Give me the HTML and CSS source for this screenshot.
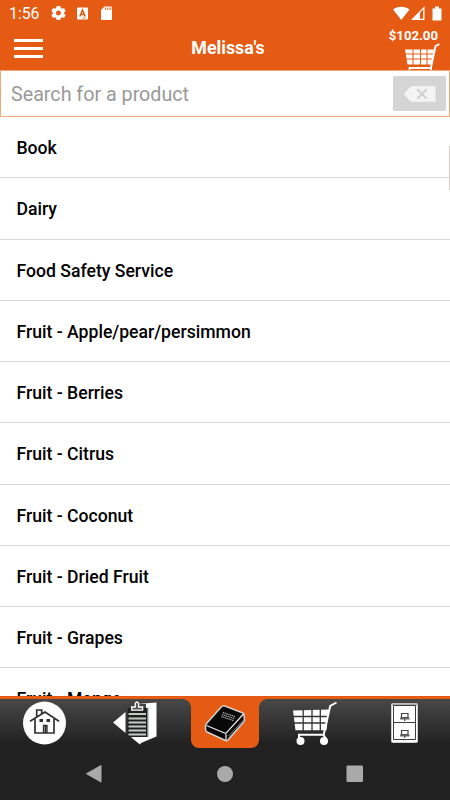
FILE: index.html
```
<!DOCTYPE html>
<html lang="en">
<head>
  <meta charset="UTF-8">
  <title>Melissa's</title>
  <link rel="stylesheet" href="styles.css">
</head>
<body>
  <div class="status-bar">
    <span class="time">1:56</span>
    <svg class="status-left" width="66" height="16" viewBox="0 0 66 16">
      <g fill="#fff">
        <path fill-rule="evenodd" d="M5.7 0h3.6l.5 2 1.2.7 2-.6 1.6 2.8-1.5 1.5v1.2l1.5 1.5-1.6 2.8-2-.6-1.2.7-.5 2H5.7l-.5-2-1.200-.7-2 .6L.4 9.100l1.500-1.500V6.400L.4 4.900 2 2.100l2 .6L5.200 2zM7.500 4.500a2.500 2.500 0 1 0 0 5 2.500 2.500 0 0 0 0-5z"/>
        <rect x="26" y="1.500" width="11" height="12" rx="1"/>
        <path d="M53.500 .5H60q1 0 1 1V13q0 1-1 1h-9q-1 0-1-1V4z"/>
      </g>
      <path d="M28.800 10.500l2.700-6.500 2.700 6.500M29.800 8.500h3.400" fill="none" stroke="#e55b13" stroke-width="1.500"/>
      <path d="M31 12h4" stroke="#e55b13" stroke-width=".7"/>
      <path d="M54.500 1.500V4M56.300 1.500V4M58.100 1.500V4M59.800 1.500V4" stroke="#e55b13" stroke-width=".8"/>
    </svg>
    <svg class="status-right" width="50" height="16" viewBox="0 0 50 16">
      <path d="M0 3.500C4.500-.3 12-.3 16.500 3.500L8.300 14z" fill="#fff"/>
      <path d="M18 14L31.500.3V14z" fill="#fff"/>
      <path d="M27 6.500l3.200-3.300v9.600H27z" fill="#e55b13"/>
      <path d="M39.500 2.500H42v-2h4v2h2.500v12h-9z" fill="#fff"/>
    </svg>
  </div>

  <div class="header">
    <div class="menu">
      <span></span>
      <span></span>
      <span></span>
    </div>
    <div class="title">Melissa's</div>
    <div class="cart">
      <div class="total">$102.00</div>
      <svg width="36" height="27" viewBox="0 0 36 27">
        <path d="M0 6.500h29L26.500 21.500H2.500z" fill="#fff"/>
        <path d="M0 11h29M1 16h28M8 6v16M15.500 6v16M22 6v16" stroke="#e55b13" stroke-width="1"/>
        <path d="M34.500 1l-4 2.200L26 24.500M4.500 27v-2H26v2" fill="none" stroke="#fff" stroke-width="1.800"/>
      </svg>
    </div>
  </div>

  <div class="search">
    <span class="placeholder">Search for a product</span>
    <div class="clear">
      <svg width="32" height="16" viewBox="0 0 32 16">
        <path d="M0 8l5.500-6.500L8 .3h23.500v15.400H8l-2.500-1.200z" fill="#f4f4f4"/>
        <path d="M13.200 3.200l9.500 9.500M22.700 3.200l-9.500 9.500" stroke="#d0d1d0" stroke-width="2"/>
      </svg>
    </div>
  </div>

  <div class="list">
    <div class="row">Book</div>
    <div class="row">Dairy</div>
    <div class="row">Food Safety Service</div>
    <div class="row">Fruit - Apple/pear/persimmon</div>
    <div class="row">Fruit - Berries</div>
    <div class="row">Fruit - Citrus</div>
    <div class="row">Fruit - Coconut</div>
    <div class="row">Fruit - Dried Fruit</div>
    <div class="row">Fruit - Grapes</div>
    <div class="row">Fruit - Mango</div>
    <div class="scrollbar"></div>
  </div>

  <div class="tabs">
    <div class="tab">
      <svg width="50" height="48" viewBox="0 0 50 48">
        <circle cx="24.500" cy="24" r="21.500" fill="#fff"/>
        <g fill="none" stroke="#303030" stroke-width="1.700">
          <path d="M10 22.200L25 13l14 9.200M15 20v14h19V20M16.700 17.500v-6.500h5V14.500" />
          <path d="M23.500 34v-7.500h3.500V34" stroke-width="1.300"/>
        </g>
        <path d="M19.500 20h3.500v3h-3.500zM26.500 20H30v3h-3.500zM24.500 26.500h2V34h-2z" fill="#303030"/>
      </svg>
    </div>
    <div class="tab">
      <svg width="50" height="48" viewBox="0 0 50 48">
        <path d="M27 5l19.500-1.500v34L31 44l-1 1.500L21 38.200l15-1.700V5z" fill="#fff"/>
        <path d="M15.500 13v21L3 23.500z" fill="#fff"/>
        <path d="M17.800 9h20.200v29H17.800z" fill="#202020"/>
        <path d="M38 8v30" stroke="#a9bbb4" stroke-width="1.300"/>
        <path d="M18.500 15H36M18.500 19.500H36M18.500 23.500H36M18.500 27.500H36M18.500 31.500H36M18.500 35.500H36" stroke="#c4cbc7" stroke-width="1.800"/>
        <path d="M21.700 8h3.500V4.500q1.700-3 3.400 0V8h4v3.200H21.700z" fill="#555" stroke="#fff" stroke-width="1.300"/>
      </svg>
    </div>
    <div class="tab active">
      <svg width="50" height="48" viewBox="0 0 50 48">
        <g transform="translate(4.500 2)">
          <path d="M16.700 6Q18.500 4 21 5.200l17.500 6.800q1.300.5 1 2l.5 5.500q-.2 1.200-1.200 2L23.500 39q-1 1.200-2.500.5L2.500 31q-1.700-1-1.500-3v-3q.2-1.500 1.500-3z" fill="#080808" stroke="#d2d0ce" stroke-width="1.500"/>
          <path d="M2 24.500l18 7.500q1.500.5 2.500-.8L39 13M21.500 33v6" fill="none" stroke="#eee" stroke-width="1.200"/>
          <path d="M24 35l15-16M24 37.300l15-16.500" stroke="#bcb9b5" stroke-width=".7"/>
          <path d="M18.500 11.400l12 4.200M17.600 13.400l12 4.200M16.800 15.400l12 4.200" stroke="#aaa" stroke-width="1.200" stroke-dasharray="1.300 .6"/>
        </g>
      </svg>
    </div>
    <div class="tab">
      <svg width="50" height="48" viewBox="0 0 50 48">
        <path d="M3 11.500l36-1-2.500 20.700h-31z" fill="#fff"/>
        <path d="M2 17.500h37M3 24h36M13.200 10v22M22 10v22M30.300 10v22" stroke="#343434" stroke-width="1.300"/>
        <path d="M46.500 3.500l-6.300 3.500-6.500 28.700H9V40M33.500 35.500l2 4" fill="none" stroke="#fff" stroke-width="2"/>
        <circle cx="10.500" cy="42" r="4" fill="#fff"/>
        <circle cx="34" cy="42" r="4" fill="#fff"/>
      </svg>
    </div>
    <div class="tab">
      <svg width="50" height="48" viewBox="0 0 50 48">
        <rect x="11.500" y="4.500" width="26" height="39" rx="1" fill="#fff" stroke="#ccc" stroke-width="1"/>
        <path d="M12 5.500h25" stroke="#aaa" stroke-width="2"/>
        <path d="M13.500 6.500h22v34h-22zM13.500 23.500h22" fill="none" stroke="#3c3c3c" stroke-width="1"/>
        <path d="M21.500 14.500h6.500v4h-6.500zM24.700 19v3M21.500 31.500h6.500v4h-6.500zM24.700 36v3" fill="none" stroke="#444" stroke-width="1.200"/>
        <path d="M20 19.500h9.500M20 36.500h9.500" stroke="#666" stroke-width="2"/>
      </svg>
    </div>
  </div>

  <div class="nav-bar">
    <svg width="450" height="52" viewBox="0 0 450 52">
      <g fill="#a9a9a9">
        <path d="M86.500 25.200l14-8q1-.4 1 .8v15.500q0 1.200-1 .8l-14-8q-.7-.6 0-1.100z"/>
        <circle cx="225" cy="26" r="8"/>
        <rect x="346.500" y="17.500" width="16.500" height="16.500" rx="1"/>
      </g>
    </svg>
  </div>
</body>
</html>
```
FILE: styles.css
```
body {
  margin: 0;
  width: 450px;
  height: 800px;
  display: flex;
  flex-direction: column;
  overflow: hidden;
  background: #fff;
  font-family: Roboto, sans-serif;
}
svg {
  display: block;
  flex: none;
}
.status-bar {
  height: 27px;
  display: flex;
  align-items: center;
  box-sizing: border-box;
  padding: 0 7px 0 9px;
  background: #e55b13;
  color: #fff;
}
.time {
  width: 42px;
  font-size: 15.8px;
  line-height: 28px;
}
.status-right {
  margin-left: auto;
}
.header {
  height: 43px;
  display: grid;
  grid-template-columns: 100px 1fr 100px;
  background: #e55b13;
  color: #fff;
}
.menu {
  width: 29px;
  padding: 12px 0 0 14px;
  display: flex;
  flex-direction: column;
  gap: 5px;
}
.menu span {
  height: 3px;
  background: #fff;
}
.title {
  padding-left: 6px;
  font-size: 17.8px;
  font-weight: 700;
  line-height: 42px;
  text-align: center;
}
.cart {
  display: flex;
  flex-direction: column;
  align-items: flex-end;
  padding-right: 9px;
}
.total {
  padding: 1px 3px 0 0;
  font-size: 13.2px;
  font-weight: 700;
  line-height: 15px;
}
.search {
  height: 47px;
  box-sizing: border-box;
  display: flex;
  align-items: center;
  justify-content: space-between;
  border: 1px solid #f5a878;
  padding: 0 3px 0 10px;
}
.placeholder {
  padding-top: 2px;
  font-size: 19.7px;
  color: #999;
}
.clear {
  width: 53px;
  height: 35px;
  display: flex;
  align-items: center;
  justify-content: center;
  background: #d4d5d4;
  border-radius: 2px;
}
.list {
  position: relative;
  height: 579px;
  overflow: hidden;
}
.row {
  height: 61.25px;
  box-sizing: border-box;
  padding-left: 16.5px;
  border-bottom: 1px solid #d9d9d9;
  color: #000;
  font-size: 17.63px;
  font-weight: 500;
  line-height: 62px;
}
.scrollbar {
  position: absolute;
  top: 29px;
  right: 0;
  width: 1px;
  height: 44px;
  background: #dcc;
}
.tabs {
  height: 52px;
  box-sizing: border-box;
  display: flex;
  border-top: 3px solid #e55b13;
  background: linear-gradient(#484848, #212121 92%);
}
.tab {
  width: 90px;
  display: flex;
  justify-content: center;
}
.active {
  position: relative;
  width: 68px;
  margin: 0 11px;
  background: #e55b13;
  border-radius: 0 0 8px 8px;
}
.active::before,
.active::after {
  content: "";
  position: absolute;
  top: 0;
  width: 8px;
  height: 8px;
}
.active::before {
  left: -8px;
  background: radial-gradient(circle at 0 100%, transparent 7.5px, #e55b13 8px);
}
.active::after {
  right: -8px;
  background: radial-gradient(circle at 100% 100%, transparent 7.5px, #e55b13 8px);
}
.nav-bar {
  height: 52px;
  background: #212121;
}
```
